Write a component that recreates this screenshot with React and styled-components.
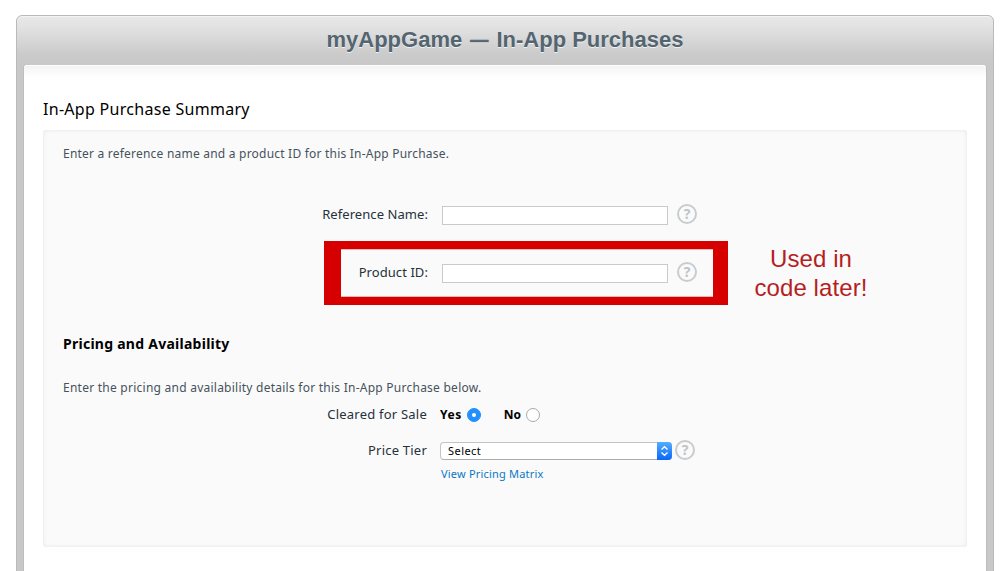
import React from "react";
import styled, { createGlobalStyle } from "styled-components";

const GlobalStyle = createGlobalStyle`
  * { box-sizing: border-box; }
  body {
    margin: 0;
    background: #fff;
    overflow: hidden;
    font-family: "Noto Sans", "Lucida Grande", sans-serif;
  }
`;

const Page = styled.div`
  height: 571px;
  padding: 15px 11px 0 16px;
  overflow: hidden;
`;

const Frame = styled.main`
  height: 600px;
  padding: 0 7px;
  border: 1px solid #b9bab9;
  border-radius: 6px 6px 0 0;
  background: #c8c8c8 linear-gradient(#e8e8e8, #e3e3e3 10px, #cbcbcb 38px, #c8c8c8 49px) no-repeat 0 0 / 100% 49px;
  box-shadow: inset 0 1px 0 #f4f4f4;
`;

const Title = styled.h1`
  margin: 0;
  height: 49px;
  text-align: center;
  font: bold 22px/47px "Liberation Sans", Arial, sans-serif;
  color: #536570;
  text-shadow: 0 1px 0 rgba(255, 255, 255, 0.7);
`;

const Dash = styled.span`
  margin: 0 2px;
  font-size: 18px;
  line-height: 1;
  vertical-align: 1px;
  -webkit-text-stroke: 0.6px #536570;
`;

const Sheet = styled.section`
  height: 540px;
  padding: 32px 19px 0;
  border-radius: 3px 3px 0 0;
  background: linear-gradient(#f2f2f2, #fff 12px);
  box-shadow: inset 0 1px 0 #fff, 0 0 0 1px #bebebe;
  clip-path: inset(0 -1px);
`;

const SummaryHeading = styled.h2`
  margin: 0 0 9px;
  font-size: 16px;
  font-weight: 400;
  line-height: 24px;
  letter-spacing: 0.29px;
  color: #000;
`;

const Panel = styled.div`
  display: flex;
  flex-direction: column;
  height: 417px;
  padding: 14px 20px 0;
  border-radius: 3px;
  background: #fafafa;
  box-shadow: inset 0 0 4px rgba(0, 0, 0, 0.09);
`;

const Note = styled.p`
  margin: ${(p) => p.$top || 0}px 0 0;
  font-size: 12px;
  line-height: 20px;
  letter-spacing: ${(p) => p.$spacing}px;
  white-space: nowrap;
  color: #46525c;
`;

const SectionHeading = styled.h3`
  margin: 52px 0 0;
  font-size: 14px;
  font-weight: 700;
  line-height: 20px;
  letter-spacing: 0.26px;
  color: #000;
`;

const Row = styled.div`
  position: relative;
  display: flex;
  align-items: center;
  height: 20px;
  margin-top: ${(p) => p.$top}px;
`;

const Label = styled.label`
  width: ${(p) => p.$width || 365}px;
  margin-right: ${(p) => p.$gap || 14}px;
  margin-bottom: ${(p) => p.$lift || 0}px;
  text-align: right;
  font-size: 13px;
  line-height: 20px;
  letter-spacing: ${(p) => p.$spacing}px;
  color: #25313b;
`;

const TextInput = styled.input`
  width: 226px;
  height: 19px;
  margin: 2px 9px 0 0;
  padding: 0 4px;
  border: 1px solid #c8cacc;
  border-radius: 0;
  background: #fff;
  outline: none;
`;

const HelpBadge = styled.span`
  flex: none;
  width: 20px;
  height: 20px;
  border: 2px solid #c8cccf;
  border-radius: 50%;
  text-align: center;
  font: bold 14px/16px "Noto Sans", sans-serif;
  color: #bfc4c7;
`;

const Highlight = styled.div`
  position: absolute;
  left: 261px;
  top: -21px;
  width: 404px;
  height: 64px;
  border: solid #d60000;
  border-width: 8px 15px 8px 17px;
  box-shadow: inset 0 1px 0 #f3b5b5, inset 0 -1px 0 #f3b5b5;
  pointer-events: none;
`;

const Annotation = styled.div`
  position: absolute;
  left: 668px;
  top: -18px;
  width: 160px;
  text-align: center;
  font: 24px/29px "Liberation Sans", Arial, sans-serif;
  letter-spacing: 0.1px;
  color: #b51f1f;
`;

const RadioText = styled.span`
  margin-right: 5px;
  font-size: 12px;
  font-weight: 700;
  line-height: 20px;
  letter-spacing: ${(p) => p.$spacing || 0}px;
  color: #000;
`;

const Radio = styled.span`
  display: grid;
  place-items: center;
  width: 14px;
  height: 14px;
  margin-right: 23px;
  border-radius: 50%;
  border: 1px solid ${(p) => (p.$checked ? "#2490fd" : "#a9a9a9")};
  background: ${(p) => (p.$checked ? "#2490fd" : "#fff")};
  &::after {
    content: "";
    width: 4px;
    height: 4px;
    border-radius: 50%;
    background: #fff;
  }
`;

const Select = styled.div`
  display: flex;
  justify-content: space-between;
  width: 232px;
  height: 18px;
  margin: 2px 3px 0 0;
  padding-left: 7px;
  border: 1px solid #c4c4c4;
  border-bottom-color: #adadad;
  border-right: 0;
  border-radius: 4px;
  background: #fff;
  font-size: 11px;
  line-height: 16px;
  letter-spacing: 0.45px;
  color: #000;
`;

const Stepper = styled.span`
  display: grid;
  place-items: center;
  width: 15px;
  height: 18px;
  margin-top: -1px;
  border-radius: 0 4px 4px 0;
  background: linear-gradient(#55aefb, #0a66fb);
`;

const MatrixLink = styled.a`
  margin: 4px 0 0 378px;
  font-size: 11px;
  line-height: 20px;
  letter-spacing: 0.19px;
  color: #0a77c4;
`;

export default function App() {
  return (
    <Page>
      <GlobalStyle />
      <Frame>
        <Title>
          myAppGame <Dash>—</Dash> In-App Purchases
        </Title>
        <Sheet>
          <SummaryHeading>In-App Purchase Summary</SummaryHeading>
          <Panel>
            <Note $spacing={0.215}>Enter a reference name and a product ID for this In-App Purchase.</Note>
            <Row $top={40}>
              <Label $spacing={0.07}>Reference Name:</Label>
              <TextInput />
              <HelpBadge>?</HelpBadge>
            </Row>
            <Row $top={38}>
              <Label $spacing={0.07}>Product ID:</Label>
              <TextInput />
              <HelpBadge>?</HelpBadge>
              <Highlight />
              <Annotation>
                Used in
                <br />
                code later!
              </Annotation>
            </Row>
            <SectionHeading>Pricing and Availability</SectionHeading>
            <Note $top={24} $spacing={0.246}>
              Enter the pricing and availability details for this In-App Purchase below.
            </Note>
            <Row $top={7}>
              <Label $width={364} $gap={13} $lift={2} $spacing={0.22}>Cleared for Sale</Label>
              <RadioText $spacing={0.55}>Yes</RadioText>
              <Radio $checked />
              <RadioText>No</RadioText>
              <Radio />
            </Row>
            <Row $top={15}>
              <Label $width={364} $gap={13} $spacing={0.22}>Price Tier</Label>
              <Select>
                Select
                <Stepper>
                  <svg width="9" height="12" viewBox="0 0 9 12" fill="none" stroke="#fff" strokeWidth="1.4">
                    <path d="M1.5 4.5 4.5 1.8l3 2.7M1.5 7.5l3 2.7 3-2.7" />
                  </svg>
                </Stepper>
              </Select>
              <HelpBadge>?</HelpBadge>
            </Row>
            <MatrixLink>View Pricing Matrix</MatrixLink>
          </Panel>
        </Sheet>
      </Frame>
    </Page>
  );
}
